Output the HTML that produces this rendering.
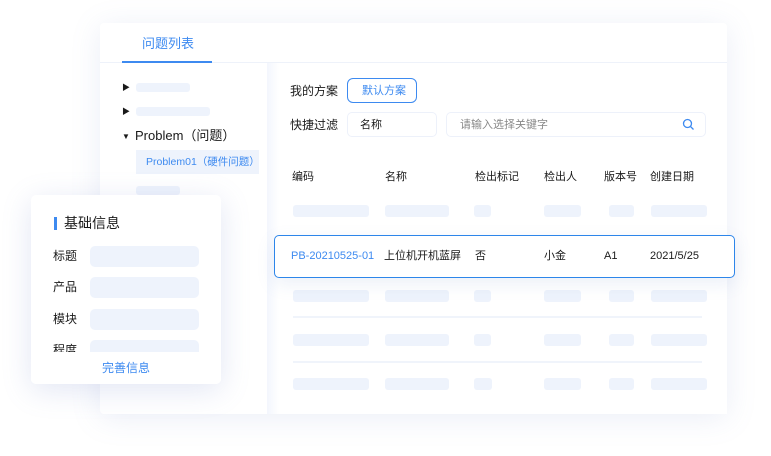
<!DOCTYPE html>
<html><head><meta charset="utf-8"><style>
*{margin:0;padding:0;box-sizing:border-box}
body{width:771px;height:456px;background:#fff;position:relative;overflow:hidden;font-family:"Liberation Sans","Noto Sans CJK SC",sans-serif;color:#1a1a1a}
.a{position:absolute}
.bar{position:absolute;background:#eef3fc;border-radius:3px;height:12px}
.t{position:absolute;font-size:11px;white-space:nowrap;line-height:16px}
.line{position:absolute;height:2px;background:#f0f4fb;left:293px;width:409px}
</style></head><body>
<div class="a" style="left:100px;top:23px;width:627px;height:391px;background:#fff;border-radius:4px;box-shadow:0 4px 30px rgba(120,140,200,0.15)"></div>
<div class="a" style="left:100px;top:62px;width:627px;height:1px;background:#eef2fa"></div>
<div class="t" style="left:142px;top:36px;font-size:13px;color:#3d8af0">问题列表</div>
<div class="a" style="left:122px;top:61px;width:90px;height:2px;background:#3d8af0"></div>
<div class="a" style="left:267px;top:63px;width:460px;height:351px;background:linear-gradient(90deg,#f3f6fd 0,#fff 12px)"></div>
<!-- sidebar -->
<div class="t" style="left:122px;top:80px;font-size:8px">▶</div>
<div class="bar" style="left:136px;top:83px;width:54px;height:9px"></div>
<div class="t" style="left:122px;top:104px;font-size:8px">▶</div>
<div class="bar" style="left:136px;top:107px;width:74px;height:9px"></div>
<div class="t" style="left:122px;top:129px;font-size:8px">▼</div>
<div class="t" style="left:135px;top:128px;font-size:13px">Problem（问题）</div>
<div class="a" style="left:136px;top:150px;width:123px;height:24px;background:#eef3fc"></div>
<div class="t" style="left:146px;top:154px;font-size:10.5px;color:#3d8af0">Problem01（硬件问题）</div>
<div class="bar" style="left:136px;top:186px;width:44px;height:9px"></div>
<!-- filters -->
<div class="t" style="left:290px;top:83px;font-size:12px">我的方案</div>
<div class="a" style="left:347px;top:78px;width:70px;height:25px;border:1px solid #3d8af0;border-radius:6px"></div>
<div class="t" style="left:362px;top:83px;color:#3d8af0">默认方案</div>
<div class="t" style="left:290px;top:117px;font-size:12px">快捷过滤</div>
<div class="a" style="left:347px;top:112px;width:90px;height:25px;border:1px solid #edf1fa;border-radius:5px"></div>
<div class="t" style="left:360px;top:117px">名称</div>
<div class="a" style="left:446px;top:112px;width:260px;height:25px;border:1px solid #edf1fa;border-radius:5px"></div>
<div class="t" style="left:460px;top:117px;color:#888">请输入选择关键字</div>
<svg class="a" style="left:682px;top:118px" width="13" height="13" viewBox="0 0 13 13"><circle cx="5.5" cy="5.5" r="4" fill="none" stroke="#3d8af0" stroke-width="1.3"/><path d="M8.5 8.5l3 3" stroke="#3d8af0" stroke-width="1.3"/></svg>
<!-- header -->
<div class="t" style="left:292px;top:169px">编码</div>
<div class="t" style="left:385px;top:169px">名称</div>
<div class="t" style="left:475px;top:169px">检出标记</div>
<div class="t" style="left:544px;top:169px">检出人</div>
<div class="t" style="left:604px;top:169px">版本号</div>
<div class="t" style="left:650px;top:169px">创建日期</div>
<!-- rows -->
<div class="bar" style="left:293px;top:205px;width:76px"></div><div class="bar" style="left:385px;top:205px;width:64px"></div><div class="bar" style="left:474px;top:205px;width:17px"></div><div class="bar" style="left:544px;top:205px;width:37px"></div><div class="bar" style="left:609px;top:205px;width:25px"></div><div class="bar" style="left:651px;top:205px;width:56px"></div>
<div class="bar" style="left:293px;top:290px;width:76px"></div><div class="bar" style="left:385px;top:290px;width:64px"></div><div class="bar" style="left:474px;top:290px;width:17px"></div><div class="bar" style="left:544px;top:290px;width:37px"></div><div class="bar" style="left:609px;top:290px;width:25px"></div><div class="bar" style="left:651px;top:290px;width:56px"></div>
<div class="line" style="top:316px"></div>
<div class="bar" style="left:293px;top:334px;width:76px"></div><div class="bar" style="left:385px;top:334px;width:64px"></div><div class="bar" style="left:474px;top:334px;width:17px"></div><div class="bar" style="left:544px;top:334px;width:37px"></div><div class="bar" style="left:609px;top:334px;width:25px"></div><div class="bar" style="left:651px;top:334px;width:56px"></div>
<div class="line" style="top:361px"></div>
<div class="bar" style="left:293px;top:378px;width:76px"></div><div class="bar" style="left:385px;top:378px;width:64px"></div><div class="bar" style="left:474px;top:378px;width:18px"></div><div class="bar" style="left:544px;top:378px;width:37px"></div><div class="bar" style="left:609px;top:378px;width:25px"></div><div class="bar" style="left:651px;top:378px;width:56px"></div>
<!-- highlight row -->
<div class="a" style="left:274px;top:235px;width:461px;height:43px;background:#fff;border:1px solid #2d86ea;border-radius:5px;box-shadow:0 6px 18px rgba(100,130,200,0.12)"></div>
<div class="t" style="left:291px;top:248px;color:#3d8af0">PB-20210525-01</div>
<div class="t" style="left:384px;top:248px">上位机开机蓝屏</div>
<div class="t" style="left:475px;top:248px">否</div>
<div class="t" style="left:544px;top:248px">小金</div>
<div class="t" style="left:604px;top:248px">A1</div>
<div class="t" style="left:650px;top:248px">2021/5/25</div>
<!-- floating card -->
<div class="a" style="left:31px;top:195px;width:190px;height:189px;background:#fff;border-radius:5px;box-shadow:0 6px 30px rgba(110,130,200,0.2);overflow:hidden">
<div class="a" style="left:23px;top:22px;width:3px;height:13px;background:#3d8af0"></div>
<div class="t" style="left:33px;top:20px;font-size:14px">基础信息</div>
<div class="t" style="left:22px;top:53px;font-size:12px">标题</div><div class="a" style="left:59px;top:51px;width:109px;height:21px;background:#eef3fc;border-radius:5px"></div>
<div class="t" style="left:22px;top:84px;font-size:12px">产品</div><div class="a" style="left:59px;top:82px;width:109px;height:21px;background:#eef3fc;border-radius:5px"></div>
<div class="t" style="left:22px;top:116px;font-size:12px">模块</div><div class="a" style="left:59px;top:114px;width:109px;height:21px;background:#eef3fc;border-radius:5px"></div>
<div class="t" style="left:22px;top:147px;font-size:12px">程度</div><div class="a" style="left:59px;top:145px;width:109px;height:21px;background:#eef3fc;border-radius:5px"></div>
<div class="a" style="left:0;top:157px;width:190px;height:32px;background:#fff"></div>
<div class="t" style="left:0;width:190px;text-align:center;top:165px;font-size:12px;color:#3d8af0">完善信息</div>
</div>
</body></html>
